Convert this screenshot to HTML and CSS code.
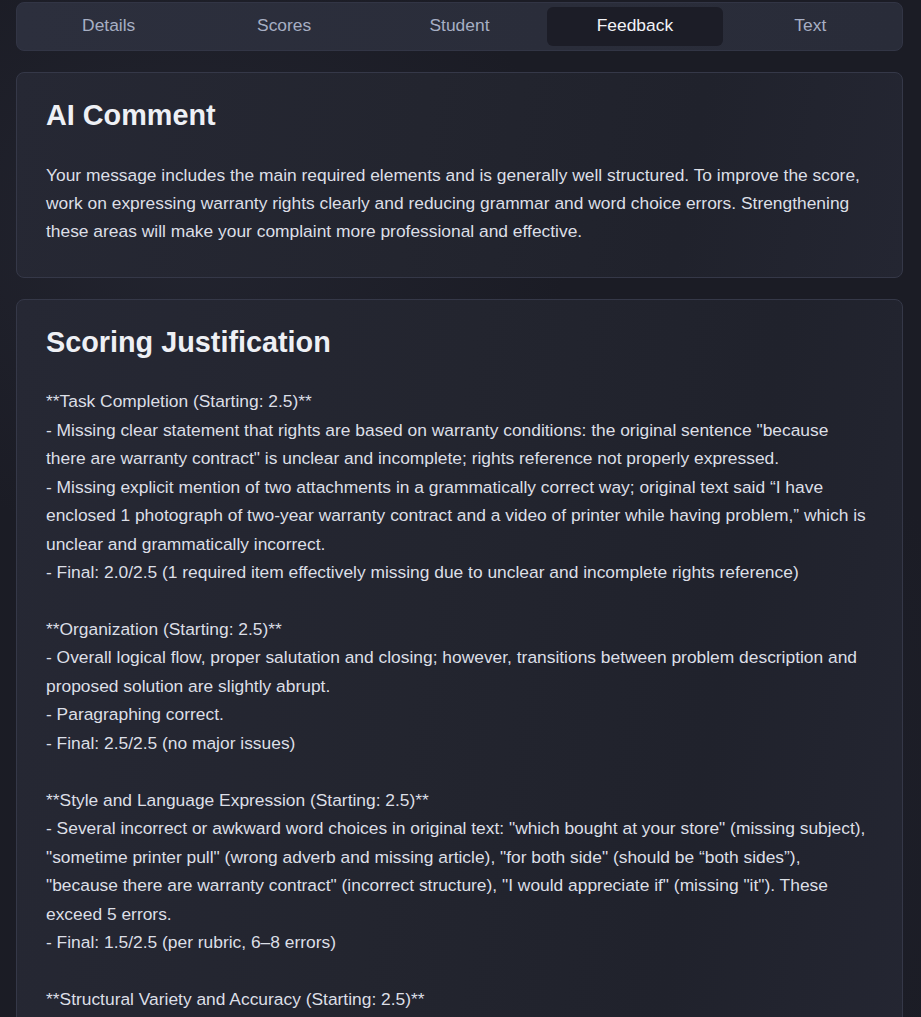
FILE: index.html
```html
<!DOCTYPE html>
<html lang="en">
<head>
<meta charset="utf-8">
<title>Feedback</title>
<link rel="stylesheet" href="styles.css">
</head>
<body>
<div class="page">
  <nav class="tabs">
    <div class="tab">Details</div>
    <div class="tab">Scores</div>
    <div class="tab">Student</div>
    <div class="tab active">Feedback</div>
    <div class="tab">Text</div>
  </nav>

  <section class="card">
    <h2 class="card-title">AI Comment</h2>
    <p class="card-text">Your message includes the main required elements and is generally well structured. To improve the score, work on expressing warranty rights clearly and reducing grammar and word choice errors. Strengthening these areas will make your complaint more professional and effective.</p>
  </section>

  <section class="card">
    <h2 class="card-title">Scoring Justification</h2>
    <div class="card-text pre">**Task Completion (Starting: 2.5)**
- Missing clear statement that rights are based on warranty conditions: the original sentence "because there are warranty contract" is unclear and incomplete; rights reference not properly expressed.
- Missing explicit mention of two attachments in a grammatically correct way; original text said “I have enclosed 1 photograph of two-year warranty contract and a video of printer while having problem,” which is unclear and grammatically incorrect.
- Final: 2.0/2.5 (1 required item effectively missing due to unclear and incomplete rights reference)

**Organization (Starting: 2.5)**
- Overall logical flow, proper salutation and closing; however, transitions between problem description and proposed solution are slightly abrupt.
- Paragraphing correct.
- Final: 2.5/2.5 (no major issues)

**Style and Language Expression (Starting: 2.5)**
- Several incorrect or awkward word choices in original text: "which bought at your store" (missing subject), "sometime printer pull" (wrong adverb and missing article), "for both side" (should be “both sides”), "because there are warranty contract" (incorrect structure), "I would appreciate if" (missing "it"). These exceed 5 errors.
- Final: 1.5/2.5 (per rubric, 6–8 errors)

**Structural Variety and Accuracy (Starting: 2.5)**
- Mostly simple and compound sentences with several grammatical errors in verb forms and articles.
- Final: 1.5/2.5</div>
  </section>
</div>
</body>
</html>
```

FILE: styles.css
```css
* { box-sizing: border-box; }

html, body {
  margin: 0;
  padding: 0;
}

body {
  background-color: #1b1c25;
  background-image:
    radial-gradient(ellipse 60% 40% at 20% 20%, rgba(48, 51, 66, 0.35), transparent 70%),
    radial-gradient(ellipse 50% 50% at 75% 70%, rgba(40, 43, 56, 0.3), transparent 70%);
  color: #dcdfe6;
  font-family: "Liberation Sans", Arial, sans-serif;
  min-height: 100vh;
}

.page {
  padding: 2px 18px 40px 16px;
  display: flex;
  flex-direction: column;
  gap: 21px;
}

.tabs {
  display: grid;
  grid-template-columns: repeat(5, 1fr);
  padding: 4px 4px;
  background: linear-gradient(90deg, #2c2f3d 0%, #2a2d3a 60%, #292c39 100%);
  border: 1px solid #323545;
  border-radius: 8px;
  height: 49px;
}

.tab {
  display: flex;
  align-items: center;
  justify-content: center;
  font-size: 17.4px;
  color: #a7afc4;
  border-radius: 6px;
  padding-bottom: 3px;
}

.tab.active {
  background: #1c1d27;
  color: #f2f3f7;
}

.card {
  background: linear-gradient(100deg, #262834 0%, #23252f 45%, #20222c 75%, #242632 100%);
  border: 1px solid #353848;
  border-radius: 8px;
  padding: 22px 30px 31px 29px;
}

.card-title {
  margin: 0;
  font-size: 28.8px;
  line-height: 40px;
  font-weight: bold;
  color: #eef0f5;
}

.card-text {
  margin: 25.5px 0 0 0;
  font-size: 17.4px;
  line-height: 28.45px;
  color: #dcdfe6;
}

.pre {
  white-space: pre-wrap;
}
```
